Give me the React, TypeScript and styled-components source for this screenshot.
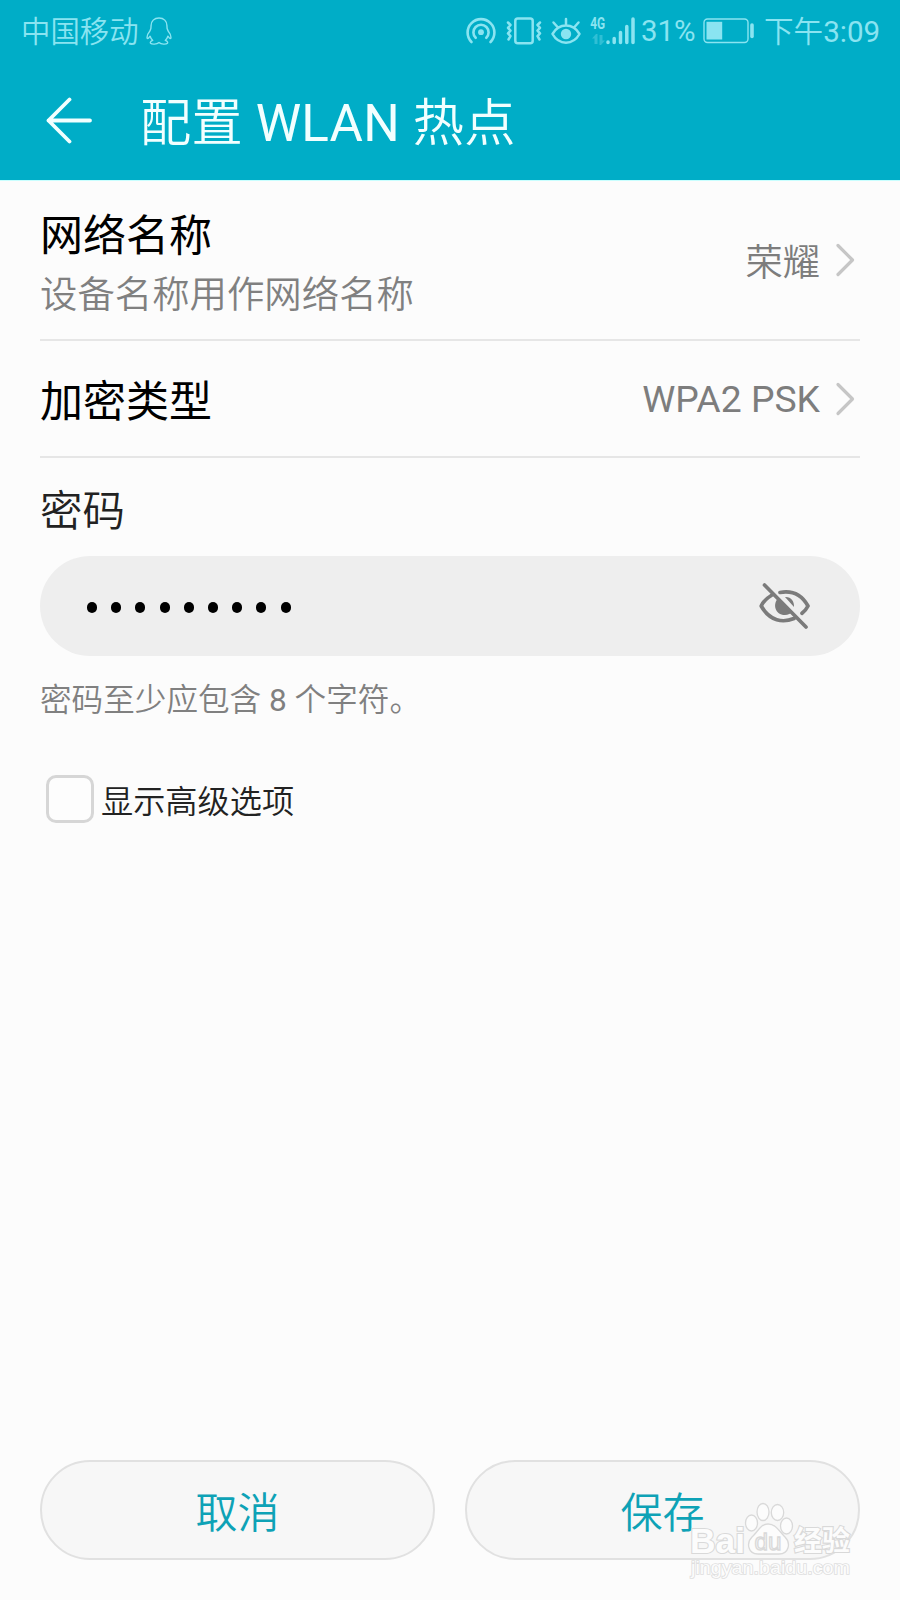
import React from "react";
import styled, { createGlobalStyle } from "styled-components";

const GlobalStyle = createGlobalStyle`
  * { box-sizing: border-box; }
  html, body { margin: 0; padding: 0; background: #fcfcfc; }
  body { font-family: Roboto, "Noto Sans CJK SC", sans-serif; }
`;

const Screen = styled.div`
  position: relative;
  display: flex;
  flex-direction: column;
  width: 900px;
  height: 1600px;
  overflow: hidden;
  background: #fcfcfc;
  white-space: nowrap;
`;

const Latin = styled.span`
  font-weight: 400;
`;

const TopArea = styled.header`
  display: flex;
  flex-direction: column;
  height: 181px;
  background: #00adc7;
  border-bottom: 1px solid #c9ffff;
`;

const StatusBar = styled.div`
  display: flex;
  align-items: center;
  height: 61px;
  padding: 0 19px 0 21px;
  color: #8ae4f1;
  font-size: 29.4px;
  font-weight: 350;
  line-height: 40px;
`;

const Carrier = styled.span`
  margin-right: 7px;
  padding-top: 3px;
`;

const StatusIcons = styled.div`
  display: flex;
  align-items: center;
  margin-left: auto;
`;

const Percent = styled.span`
  width: 56px;
  margin: 0 6px 0 5px;
  padding-top: 1px;
  font-weight: 400;
`;

const Clock = styled.span`
  width: 117px;
  margin-left: 9px;
  padding-top: 2px;
  font-size: 29.6px;
`;

const TitleBar = styled.div`
  display: flex;
  align-items: center;
  height: 119px;
  padding-left: 45px;
`;

const BackButton = styled.button`
  display: flex;
  width: 48px;
  height: 48px;
  padding: 0;
  border: 0;
  background: none;
`;

const Title = styled.h1`
  margin: 6px 0 0 47px;
  color: #f2ffff;
  font-size: 51.2px;
  font-weight: 350;
  letter-spacing: 0.2px;
  line-height: 70px;
`;

const Content = styled.main`
  display: flex;
  flex: 1;
  flex-direction: column;
  padding: 0 40px;
`;

const Row = styled.div<{ $height: number }>`
  display: flex;
  align-items: center;
  justify-content: space-between;
  height: ${(p) => p.$height}px;
  border-bottom: 2px solid #e6e6e6;
`;

const RowText = styled.div<{ $drop: number }>`
  display: flex;
  flex-direction: column;
  padding-top: ${(p) => p.$drop}px;
`;

const RowTitle = styled.span`
  color: #000;
  font-size: 43px;
  line-height: 60px;
`;

const RowNote = styled.span`
  color: #808080;
  font-size: 37.4px;
  font-weight: 350;
  line-height: 59px;
`;

const RowValue = styled.div`
  display: flex;
  align-items: center;
  gap: 14px;
  padding-right: 4px;
  color: #7d7d7d;
  font-size: 37.3px;
  line-height: 50px;
`;

const ValueText = styled.span<{ $drop: number; $weight: number }>`
  padding-top: ${(p) => p.$drop}px;
  font-weight: ${(p) => p.$weight};
`;

const FieldLabel = styled.label`
  height: 60px;
  margin-top: 24px;
  color: #222;
  font-size: 42.5px;
  font-weight: 350;
  line-height: 60px;
`;

const PasswordField = styled.div`
  display: flex;
  align-items: center;
  justify-content: space-between;
  height: 100px;
  margin-top: 14px;
  padding: 0 48px 0 47px;
  border-radius: 50px;
  background: #eee;
`;

const Dots = styled.div`
  display: flex;
  gap: 14.2px;
  padding-top: 3px;
`;

const Dot = styled.i`
  width: 10px;
  height: 11px;
  border-radius: 5px;
  background: #000;
`;

const Hint = styled.p`
  height: 50px;
  margin: 20px 0 0;
  color: #808080;
  font-size: 31.6px;
  font-weight: 350;
  line-height: 50px;
`;

const Option = styled.label`
  display: flex;
  align-items: center;
  height: 50px;
  margin-top: 48px;
  padding-left: 6px;
  color: #222;
  font-size: 32.2px;
  font-weight: 350;
  line-height: 50px;
`;

const OptionText = styled.span`
  padding-top: 5px;
`;

const Checkbox = styled.span`
  width: 48px;
  height: 48px;
  margin-right: 7px;
  border: 3px solid #d6d6d6;
  border-radius: 10px;
  background: #fdfdfd;
`;

const Actions = styled.footer`
  display: flex;
  gap: 30px;
  margin-top: auto;
  padding-bottom: 40px;
`;

const ActionButton = styled.button`
  flex: 1;
  height: 100px;
  padding: 8px 0 0;
  border: 2px solid #e1e1e1;
  border-radius: 50px;
  background: #f7f7f7;
  color: #0ea2b6;
  font: 350 42px/60px Roboto, "Noto Sans CJK SC", sans-serif;
`;

const Watermark = styled.div`
  position: absolute;
  left: 688px;
  top: 1500px;
`;

function Chevron() {
  return (
    <svg width="22" height="34" viewBox="0 0 22 34" fill="none" stroke="#c6c6c6" strokeWidth="3.200" strokeLinecap="round" strokeLinejoin="round">
      <path d="M4 2.500 18.500 17 4 31.500" />
    </svg>
  );
}

function PenguinIcon() {
  return (
    <svg width="26" height="28" viewBox="0 0 24 28" preserveAspectRatio="none" fill="none" stroke="currentColor" strokeWidth="1.300" strokeLinejoin="round">
      <path d="M12 1C7.500 1 4.700 4.200 4.700 8.500L4.500 11.500 3.500 14.200C1.800 16.500.6 19 1.100 21.300 1.800 22 3 20.500 3.800 19.200 4.200 21 5 22.200 6.200 23.400 4.600 24 3.600 25 4.200 26.200 5.500 27.600 10 27.300 12 25.500 14 27.300 18.500 27.600 19.800 26.200 20.400 25 19.400 24 17.800 23.400 19 22.200 19.800 21 20.200 19.200 21 20.500 22.200 22 22.900 21.300 23.400 19 22.200 16.500 20.500 14.200L19.500 11.500 19.300 8.500C19.300 4.200 16.500 1 12 1Z" />
    </svg>
  );
}

function HotspotIcon() {
  return (
    <svg width="30" height="28" viewBox="0 0 30 28" fill="none" stroke="currentColor" strokeWidth="2.600" strokeLinecap="round">
      <path d="M5.500 25A13.400 13.400 0 1 1 24.500 25M9.700 20.800A7.600 7.600 0 1 1 20.300 20.800" />
      <circle cx="15" cy="15.200" r="2.900" fill="currentColor" stroke="none" />
    </svg>
  );
}

function VibrateIcon() {
  return (
    <svg width="36" height="28" viewBox="0 0 36 28" fill="none" stroke="currentColor" strokeWidth="2.500" strokeLinecap="round" strokeLinejoin="round">
      <rect x="9.300" y="1.500" width="17.400" height="24.800" rx="2.500" />
      <path d="M2 5.500 4.500 8 2 10.800 4.500 13.600 2 16.400 4.500 19.200 2.500 22.500M34 5.500 31.500 8 34 10.800 31.500 13.600 34 16.400 31.500 19.200 33.500 22.500" />
    </svg>
  );
}

function EyeCareIcon() {
  return (
    <svg width="30" height="28" viewBox="0 0 30 28" fill="none" stroke="currentColor" strokeWidth="2.500" strokeLinecap="round" strokeLinejoin="round">
      <path d="M1.500 17C8 5.800 22 5.800 28.500 17 22 28.500 8 28.500 1.500 17ZM15 8V2M6.500 10 2.500 5.500M23.500 10 27.500 5.500" />
      <circle cx="15" cy="17" r="5.200" fill="currentColor" stroke="none" />
    </svg>
  );
}

const SignalBox = styled.div`
  display: flex;
  align-items: flex-end;
  height: 28px;
`;

const Network = styled.div`
  display: flex;
  flex-direction: column;
  align-items: center;
  gap: 4px;
  width: 16px;
  height: 28px;
  font: 700 17px/13px Roboto, sans-serif;

  span {
    transform: scaleX(0.7);
  }
`;

function Signal() {
  return (
    <SignalBox>
      <Network>
        <span>4G</span>
        <svg width="13" height="11" viewBox="0 0 13 11" fill="#2fbfd5">
          <path d="M4 0 0 4.500H2.500V10H5.500V0ZM9 11 13 6.500H10.500V1H7.500V11Z" />
        </svg>
      </Network>
      <svg width="30" height="28" viewBox="0 0 30 28" stroke="currentColor" strokeWidth="3.500" strokeLinecap="round">
        <path d="M2 25V25.500M8.200 21.500V25.500M14.500 15.500V25.500M20.800 9.500V25.500M27 2V25.500" />
      </svg>
    </SignalBox>
  );
}

function BatteryIcon() {
  return (
    <svg width="52" height="26" viewBox="0 0 52 26" fill="none" stroke="currentColor">
      <rect x="1" y="1" width="44" height="23.500" rx="3.500" strokeWidth="1.400" />
      <path d="M3.500 3.800H19.200V21.500H3.500Z" fill="currentColor" stroke="none" />
      <path d="M49 7V18.500" strokeWidth="3.600" strokeLinecap="round" />
    </svg>
  );
}

function HiddenEyeIcon() {
  return (
    <svg width="54" height="50" viewBox="0 0 54 50" fill="none" stroke="#7b7b7b" strokeWidth="3.700" strokeLinecap="round" strokeLinejoin="round">
      <path d="M14 14C9 17 5 21 3.200 25 12 40.500 25 42 36 37.500M22 11.500C33 9.500 43 12.500 50 25 48.500 28 46.500 30.300 44 32.300" />
      <path d="M20 17.500C14.500 23 17 34 27 34 30 34 33 32.500 34.500 30.500ZM27 16C33 15.500 36.500 20.500 36 26Z" fill="#7b7b7b" stroke="none" />
      <path d="M6.500 4 48 46" />
    </svg>
  );
}

function BaiduMark() {
  return (
    <svg width="170" height="80" viewBox="0 0 170 80" fill="#fcfcfc" stroke="#d9d9d9" strokeWidth="1.300" fontFamily='"Liberation Sans", "Noto Sans CJK SC", sans-serif'>
      <text x="2" y="53" fontSize="35" fontWeight="700" textLength="55" lengthAdjust="spacingAndGlyphs" paintOrder="stroke" strokeWidth="2.200">Bai</text>
      <ellipse cx="63.500" cy="23" rx="6" ry="8" />
      <ellipse cx="75" cy="12" rx="6" ry="8.500" />
      <ellipse cx="89.500" cy="12.500" rx="6.200" ry="8" />
      <ellipse cx="98.500" cy="26" rx="6" ry="8" />
      <path d="M80 24C72 24 70 32 64 37 58 43 60 54 70 54 76 54 84 54 91 54 101 54 103 43 97 37 91 31 88 24 80 24Z" />
      <text x="66.500" y="50" fontSize="24" textLength="27" lengthAdjust="spacingAndGlyphs" fill="#f7f7f7" strokeWidth="1.300">du</text>
      <text x="106" y="51" fontSize="28" fontWeight="700" textLength="56" paintOrder="stroke" strokeWidth="2.200">经验</text>
      <text x="3" y="74" fontSize="19" textLength="159" lengthAdjust="spacingAndGlyphs" paintOrder="stroke" stroke="#dfdfdf" strokeWidth="1.700">jingyan.baidu.com</text>
    </svg>
  );
}

const Spacer = styled.span<{ $w: number }>`
  width: ${(p) => p.$w}px;
`;

const PASSWORD_LENGTH = 9;

export default function App() {
  return (
    <Screen>
      <GlobalStyle />
      <TopArea>
        <StatusBar>
          <Carrier>中国移动</Carrier>
          <PenguinIcon />
          <StatusIcons>
            <HotspotIcon />
            <Spacer $w={10} />
            <VibrateIcon />
            <Spacer $w={9} />
            <EyeCareIcon />
            <Spacer $w={9} />
            <Signal />
            <Percent>31%</Percent>
            <BatteryIcon />
            <Clock>
              下午<Latin>3:09</Latin>
            </Clock>
          </StatusIcons>
        </StatusBar>
        <TitleBar>
          <BackButton aria-label="返回">
            <svg width="48" height="48" viewBox="0 0 48 48" fill="none" stroke="#f2ffff" strokeWidth="3.800" strokeLinecap="round" strokeLinejoin="round">
              <path d="M24.500 2.500 3.500 23.500 24.500 44.500M3.500 23.500H45" />
            </svg>
          </BackButton>
          <Title>
            配置<Latin> WLAN </Latin>热点
          </Title>
        </TitleBar>
      </TopArea>
      <Content>
        <Row $height={160}>
          <RowText $drop={11}>
            <RowTitle>网络名称</RowTitle>
            <RowNote>设备名称用作网络名称</RowNote>
          </RowText>
          <RowValue>
            <ValueText $drop={6} $weight={350}>荣耀</ValueText>
            <Chevron />
          </RowValue>
        </Row>
        <Row $height={117}>
          <RowText $drop={6}>
            <RowTitle>加密类型</RowTitle>
          </RowText>
          <RowValue>
            <ValueText $drop={1} $weight={400}>WPA2 PSK</ValueText>
            <Chevron />
          </RowValue>
        </Row>
        <FieldLabel>密码</FieldLabel>
        <PasswordField>
          <Dots>
            {Array.from({ length: PASSWORD_LENGTH }, (_, i) => (
              <Dot key={i} />
            ))}
          </Dots>
          <HiddenEyeIcon />
        </PasswordField>
        <Hint>
          密码至少应包含<Latin> 8 </Latin>个字符。
        </Hint>
        <Option>
          <Checkbox />
          <OptionText>显示高级选项</OptionText>
        </Option>
        <Actions>
          <ActionButton>取消</ActionButton>
          <ActionButton>保存</ActionButton>
        </Actions>
      </Content>
      <Watermark>
        <BaiduMark />
      </Watermark>
    </Screen>
  );
}
